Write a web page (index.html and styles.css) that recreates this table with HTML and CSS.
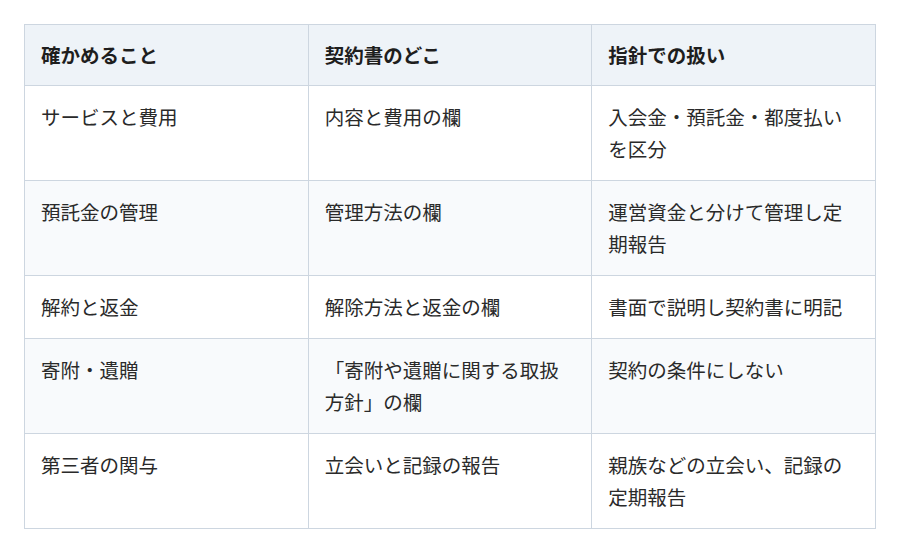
FILE: index.html
```html
<!DOCTYPE html>
<html lang="ja">
<head>
<meta charset="utf-8">
<link rel="stylesheet" href="styles.css">
</head>
<body>
<table class="check-table">
  <thead>
    <tr>
      <th>確かめること</th>
      <th>契約書のどこ</th>
      <th>指針での扱い</th>
    </tr>
  </thead>
  <tbody>
    <tr>
      <td>サービスと費用</td>
      <td>内容と費用の欄</td>
      <td>入会金・預託金・都度払いを区分</td>
    </tr>
    <tr>
      <td>預託金の管理</td>
      <td>管理方法の欄</td>
      <td>運営資金と分けて管理し定期報告</td>
    </tr>
    <tr>
      <td>解約と返金</td>
      <td>解除方法と返金の欄</td>
      <td>書面で説明し契約書に明記</td>
    </tr>
    <tr>
      <td>寄附・遺贈</td>
      <td>「寄附や遺贈に関する取扱方針」の欄</td>
      <td>契約の条件にしない</td>
    </tr>
    <tr>
      <td>第三者の関与</td>
      <td>立会いと記録の報告</td>
      <td>親族などの立会い、記録の定期報告</td>
    </tr>
  </tbody>
</table>
</body>
</html>
```

FILE: styles.css
```css
html, body {
  margin: 0;
  padding: 0;
  background: #ffffff;
}

body {
  padding: 24px;
  font-family: "Noto Sans CJK JP", "Noto Sans", sans-serif;
  color: #2a2a2a;
}

.check-table {
  width: 852px;
  border-collapse: collapse;
  table-layout: fixed;
  font-size: 19.5px;
  line-height: 32px;
}

.check-table th,
.check-table td {
  border: 1px solid #cdd6e0;
  padding: 15px 16px;
  text-align: left;
  vertical-align: top;
}

.check-table th {
  padding: 14px 16px;
  background: #eef3f8;
  font-weight: 700;
  color: #1e1e1e;
}

.check-table tbody tr:nth-child(even) td {
  background: #f8fafc;
}
```
